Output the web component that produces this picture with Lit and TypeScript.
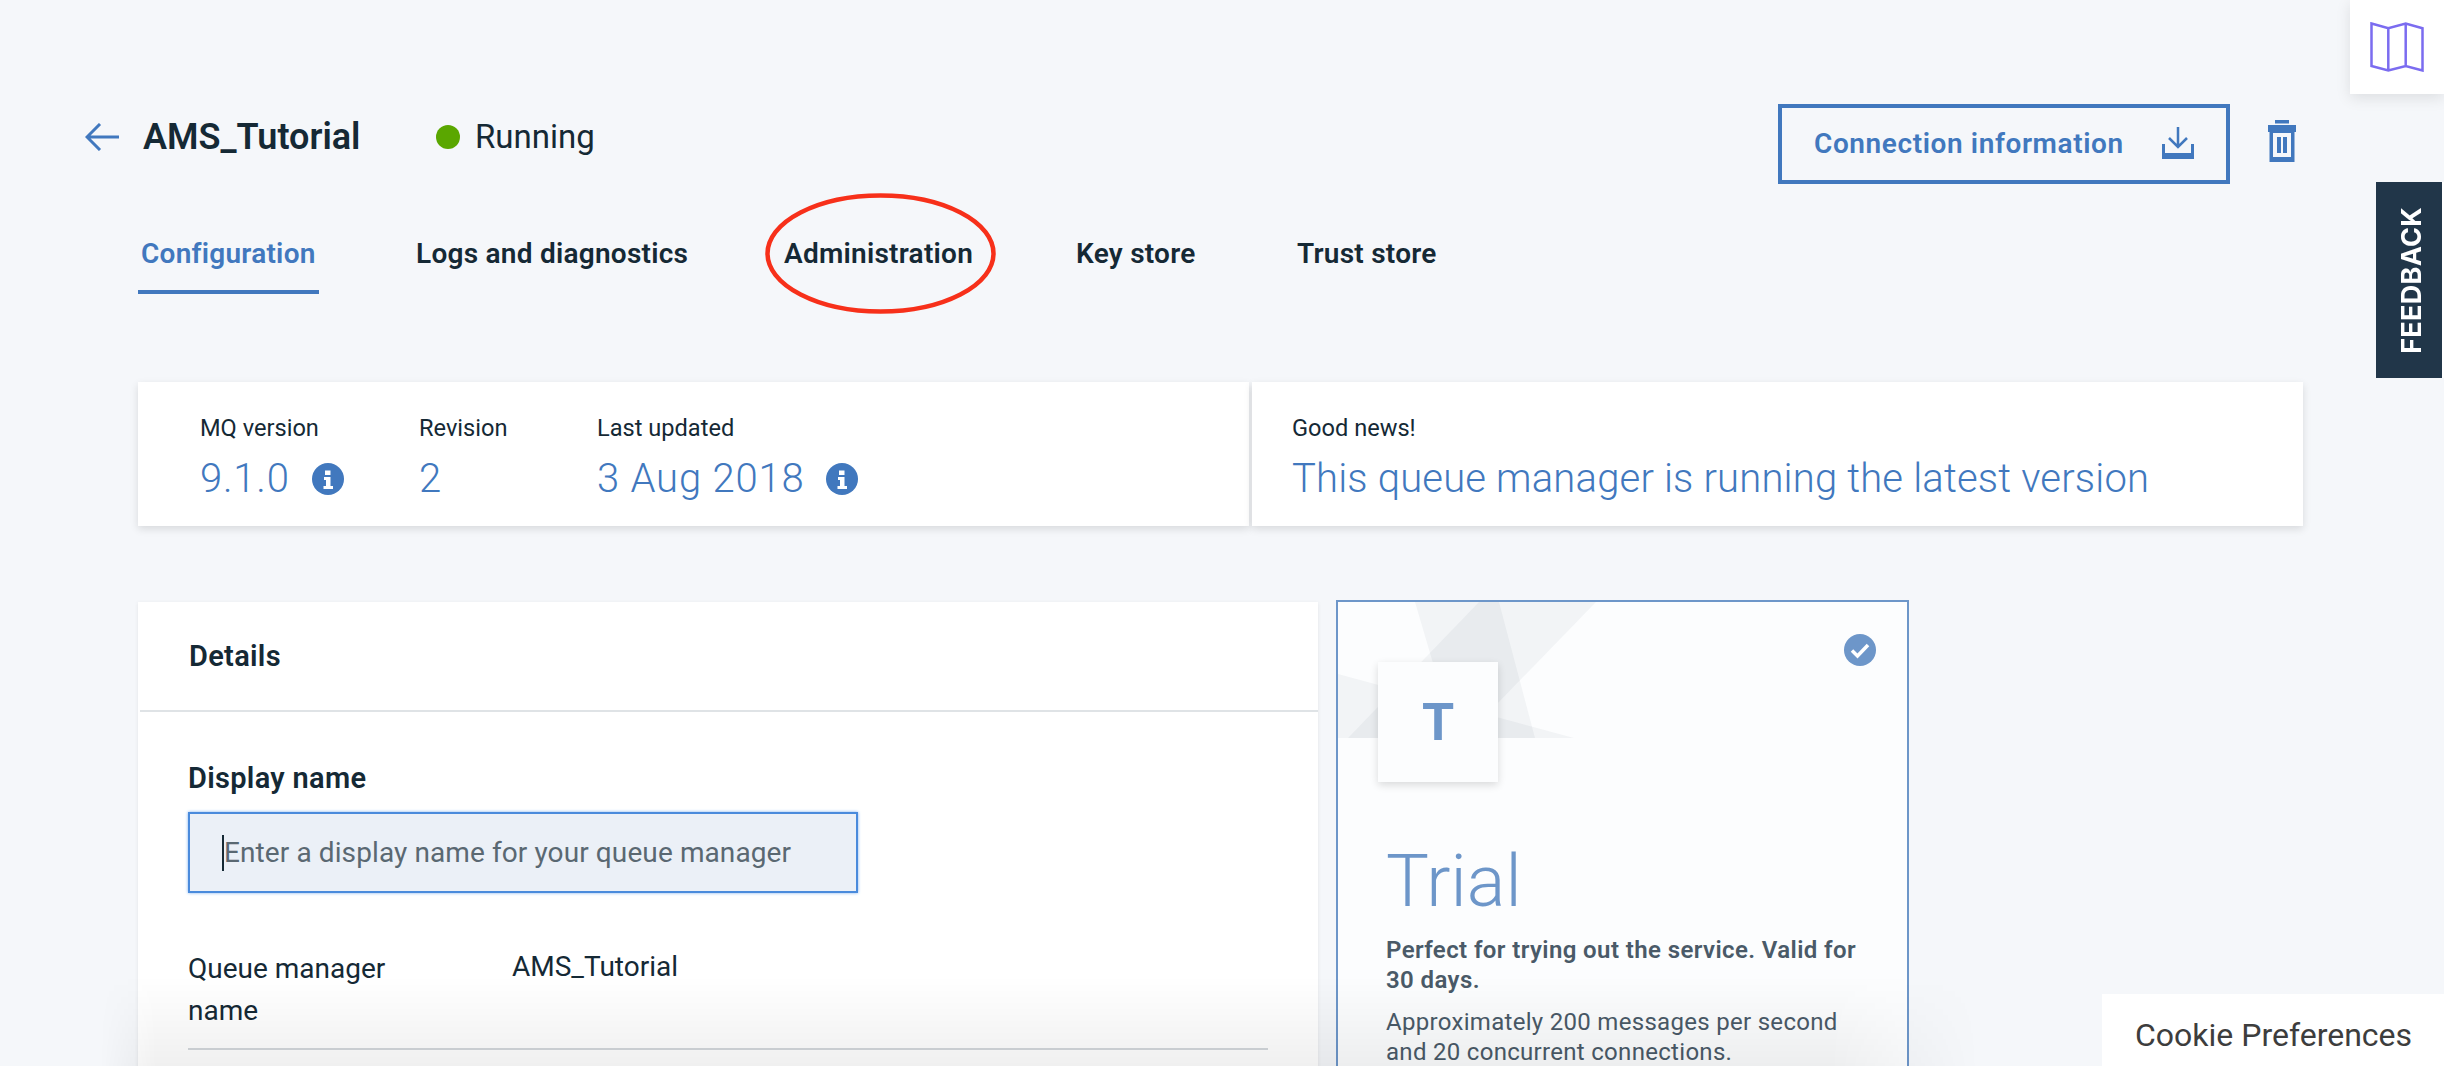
import { LitElement, html, css } from "lit";
import { customElement } from "lit/decorators.js";

const infoIcon = html`<svg class="info" viewBox="0 0 32 32">
  <circle cx="16" cy="16" r="16" fill="#4178be"></circle>
  <path fill="#fff" d="M13 7.500h5.500v4.500H13zM12 14h6.500v9H21v3H11.500v-3H14v-6h-2z"></path>
</svg>`;

@customElement("app-root")
export class AppRoot extends LitElement {
  static styles = css`
    :host {
      display: block;
      position: relative;
      width: 2444px;
      height: 1066px;
      overflow: hidden;
      background: #f5f7fa;
      font-family: Roboto, "Open Sans", sans-serif;
      color: #152935;
    }
    .page {
      display: flex;
      flex-direction: column;
      padding: 104px 141px 0 85px;
    }
    .top {
      display: flex;
      align-items: flex-start;
      height: 80px;
    }
    .back {
      width: 34px;
      height: 28px;
      margin-top: 19px;
      margin-right: 24px;
    }
    .title {
      font-size: 36px;
      font-weight: 600;
      line-height: 40px;
      margin-top: 13px;
      width: 293px;
    }
    .status {
      display: flex;
      align-items: center;
      gap: 15px;
      font-size: 33px;
      line-height: 40px;
      margin-top: 13px;
      flex: 1;
    }
    .dot {
      width: 24px;
      height: 24px;
      border-radius: 50%;
      background: #5aa700;
    }
    .conn {
      box-sizing: border-box;
      width: 452px;
      height: 80px;
      border: 4px solid #4178be;
      display: flex;
      align-items: center;
      padding: 0 32px 2px;
      justify-content: space-between;
      color: #4178be;
      font-size: 28px;
      font-weight: 600;
      letter-spacing: 0.6px;
    }
    .conn svg {
      width: 32px;
      height: 32px;
    }
    .trash {
      width: 28px;
      height: 42px;
      margin: 16px 7px 0 38px;
    }
    .tabs {
      display: grid;
      grid-template-columns: 275px 368px 292px 221px auto;
      height: 60px;
      margin: 50px 0 0 53px;
      font-size: 28px;
      font-weight: 600;
      line-height: 40px;
      letter-spacing: 0.25px;
    }
    .tab {
      display: block;
      width: max-content;
      height: 60px;
      box-sizing: border-box;
      padding: 0 3px;
      white-space: nowrap;
    }
    .tab.active {
      color: #4178be;
      border-bottom: 4px solid #4178be;
    }
    .summary {
      display: flex;
      gap: 3px;
      margin: 88px 0 0 53px;
      height: 144px;
    }
    .panel {
      background: #fff;
      box-shadow: 0 3px 8px rgba(0, 0, 0, 0.12);
      padding-top: 28px;
      box-sizing: border-box;
    }
    .panel.meta {
      width: 1111px;
      display: flex;
      padding-left: 62px;
    }
    .panel.news {
      flex: 1;
      padding-left: 40px;
    }
    .stat.version {
      width: 219px;
    }
    .stat.revision {
      width: 178px;
    }
    .label {
      font-size: 23.6px;
      line-height: 36px;
      margin-bottom: 7px;
    }
    .value {
      display: flex;
      align-items: center;
      gap: 22px;
      font-size: 40px;
      font-weight: 300;
      line-height: 52px;
      color: #4178be;
      white-space: nowrap;
      letter-spacing: 0.17px;
    }
    .stat .value {
      letter-spacing: 0.8px;
    }
    .info {
      width: 32px;
      height: 32px;
    }
    .lower {
      display: flex;
      gap: 18px;
      margin: 76px 0 0 53px;
    }
    .details {
      width: 1180px;
      height: 500px;
      background: #fff;
      box-shadow: 0 1px 4px rgba(0, 0, 0, 0.08);
    }
    .details-head {
      height: 110px;
      box-sizing: border-box;
      margin-left: 2px;
      padding: 34px 0 0 49px;
      border-bottom: 2px solid #dfe3e6;
      font-size: 29px;
      font-weight: 600;
      line-height: 40px;
      letter-spacing: 0.3px;
    }
    .details-body {
      padding: 46px 50px 0 50px;
    }
    .field-label {
      font-size: 29px;
      font-weight: 600;
      line-height: 40px;
      letter-spacing: 0.3px;
      margin-bottom: 14px;
    }
    .input {
      box-sizing: border-box;
      width: 670px;
      height: 81px;
      background: #ebf0f7;
      border: 2px solid #4a8bdc;
      box-shadow: 0 0 3px #7fb0ee;
      display: flex;
      align-items: center;
      padding-left: 32px;
      font-size: 28px;
      letter-spacing: 0.1px;
      color: #5a6872;
      white-space: nowrap;
    }
    .caret {
      width: 2px;
      height: 36px;
      background: #152935;
    }
    .row {
      display: flex;
      margin-top: 52px;
      padding-bottom: 16px;
      border-bottom: 2px solid #d3d8dc;
      font-size: 28px;
      line-height: 42px;
    }
    .row-key {
      width: 324px;
      padding-right: 60px;
      box-sizing: border-box;
      margin-top: 3px;
    }
    .row-value {
      margin-top: 1px;
    }
    .trial {
      position: relative;
      box-sizing: border-box;
      width: 573px;
      height: 500px;
      margin-top: -2px;
      border: 2px solid #6d96c9;
      background: #fcfdfe;
    }
    .art {
      display: block;
      width: 100%;
      height: 136px;
    }
    .art polygon {
      fill: rgba(60, 70, 90, 0.05);
    }
    .tile {
      position: absolute;
      left: 40px;
      top: 60px;
      width: 120px;
      height: 120px;
      background: #fcfdfe;
      box-shadow: 0 3px 8px rgba(0, 0, 0, 0.14);
      display: flex;
      align-items: center;
      justify-content: center;
      color: #6d96c9;
      font-size: 52px;
      font-weight: 700;
    }
    .check {
      position: absolute;
      right: 31px;
      top: 32px;
      width: 32px;
      height: 32px;
    }
    .trial-body {
      padding: 99px 40px 0 48px;
    }
    .trial-name {
      font-size: 72px;
      font-weight: 300;
      line-height: 90px;
      color: #6d96c9;
    }
    .trial-lead {
      font-size: 24px;
      font-weight: 600;
      line-height: 30px;
      letter-spacing: 0.4px;
      color: #4a5a68;
      margin-top: 8px;
    }
    .trial-note {
      font-size: 24px;
      line-height: 30px;
      letter-spacing: 0.3px;
      color: #4a5a68;
      margin-top: 12px;
    }
    .fade {
      position: absolute;
      left: 100px;
      width: 1880px;
      bottom: 0;
      height: 90px;
      background: linear-gradient(rgba(0, 0, 0, 0), rgba(0, 0, 0, 0.06));
      -webkit-mask-image: linear-gradient(to right, transparent, #000 3%, #000 92%, transparent);
      mask-image: linear-gradient(to right, transparent, #000 3%, #000 92%, transparent);
      pointer-events: none;
    }
    .map {
      position: absolute;
      top: 0;
      right: 0;
      width: 94px;
      height: 94px;
      background: #fff;
      box-shadow: 0 4px 14px rgba(0, 0, 0, 0.1);
      display: flex;
      align-items: center;
      justify-content: center;
    }
    .map svg {
      width: 54px;
      height: 50px;
    }
    .feedback {
      position: absolute;
      top: 182px;
      right: 0;
      box-sizing: border-box;
      width: 68px;
      height: 196px;
      padding-left: 4px;
      background: #213649;
      border-right: 2px solid #fff;
      display: flex;
      align-items: center;
      justify-content: center;
      color: #fff;
      font-family: Inter, sans-serif;
      font-size: 27px;
      font-weight: 700;
      letter-spacing: 0.3px;
    }
    .feedback span {
      writing-mode: vertical-rl;
      transform: rotate(180deg);
    }
    .cookie {
      position: absolute;
      right: 0;
      bottom: 0;
      width: 342px;
      height: 72px;
      box-sizing: border-box;
      padding: 10px 0 0 33px;
      background: #fff;
      display: flex;
      align-items: center;
      color: #3d3d3d;
      font-size: 32px;
      white-space: nowrap;
    }
    .mark {
      position: absolute;
      left: 765px;
      top: 193px;
      width: 231px;
      height: 121px;
      pointer-events: none;
    }
  `;

  render() {
    return html`
      <div class="page">
        <div class="top">
          <svg class="back" viewBox="0 0 34 28" fill="none" stroke="#4178be" stroke-width="3">
            <path d="M15 1 2 14l13 13M2 14h32"></path>
          </svg>
          <div class="title">AMS_Tutorial</div>
          <div class="status"><span class="dot"></span>Running</div>
          <div class="conn">
            <span>Connection information</span>
            <svg viewBox="0 0 32 32">
              <path d="M16 0v19M7 11l9 9 9-9" fill="none" stroke="#4178be" stroke-width="2.500"></path>
              <path d="M0 17h3v9h26v-9h3v15H0z" fill="#4178be"></path>
            </svg>
          </div>
          <svg class="trash" viewBox="0 0 28 42" fill="#4178be" fill-rule="evenodd">
            <path d="M7 0h14v3.500H7zM0 5h28v7H0zM1.500 12h25v30h-25zM5 13v24h18V13zM9 17h4v16H9zM15 17h4v16h-4z"></path>
          </svg>
        </div>
        <div class="tabs">
          <div><span class="tab active">Configuration</span></div>
          <div><span class="tab">Logs and diagnostics</span></div>
          <div><span class="tab">Administration</span></div>
          <div><span class="tab">Key store</span></div>
          <div><span class="tab">Trust store</span></div>
        </div>
        <div class="summary">
          <div class="panel meta">
            <div class="stat version">
              <div class="label">MQ version</div>
              <div class="value">9.1.0 ${infoIcon}</div>
            </div>
            <div class="stat revision">
              <div class="label">Revision</div>
              <div class="value">2</div>
            </div>
            <div class="stat">
              <div class="label">Last updated</div>
              <div class="value">3 Aug 2018 ${infoIcon}</div>
            </div>
          </div>
          <div class="panel news">
            <div class="label">Good news!</div>
            <div class="value">This queue manager is running the latest version</div>
          </div>
        </div>
        <div class="lower">
          <div class="details">
            <div class="details-head">Details</div>
            <div class="details-body">
              <div class="field-label">Display name</div>
              <div class="input"><span class="caret"></span>Enter a display name for your queue manager</div>
              <div class="row">
                <div class="row-key">Queue manager name</div>
                <div class="row-value">AMS_Tutorial</div>
              </div>
            </div>
          </div>
          <div class="trial">
            <svg class="art" viewBox="0 0 569 136" preserveAspectRatio="none">
              <polygon points="77,0 161,0 197,136 117,136"></polygon>
              <polygon points="141,0 258,0 126,136 10,136"></polygon>
              <polygon points="0,72 236,136 0,136"></polygon>
            </svg>
            <div class="tile">T</div>
            <svg class="check" viewBox="0 0 32 32">
              <circle cx="16" cy="16" r="16" fill="#6d96c9"></circle>
              <path d="M8 16.500l5.500 5.500L24 11" fill="none" stroke="#fff" stroke-width="3.500"></path>
            </svg>
            <div class="trial-body">
              <div class="trial-name">Trial</div>
              <div class="trial-lead">Perfect for trying out the service. Valid for 30 days.</div>
              <div class="trial-note">Approximately 200 messages per second and 20 concurrent connections.</div>
            </div>
          </div>
        </div>
      </div>
      <div class="fade"></div>
      <svg class="mark" viewBox="0 0 231 121" fill="none" stroke="#f7301a" stroke-width="4.500">
        <ellipse cx="115.500" cy="60.500" rx="113" ry="58"></ellipse>
      </svg>
      <div class="map">
        <svg viewBox="0 0 54 50" fill="none" stroke="#7b6cf0" stroke-width="2.500">
          <path d="M1.500 1.500 18.300 6.300 35.700 1.500 52.500 6.300V48.500L35.700 44 18.300 48.500 1.500 44zM18.300 6.300V48.500M35.700 1.500V44"></path>
        </svg>
      </div>
      <div class="feedback"><span>FEEDBACK</span></div>
      <div class="cookie">Cookie Preferences</div>
    `;
  }
}
